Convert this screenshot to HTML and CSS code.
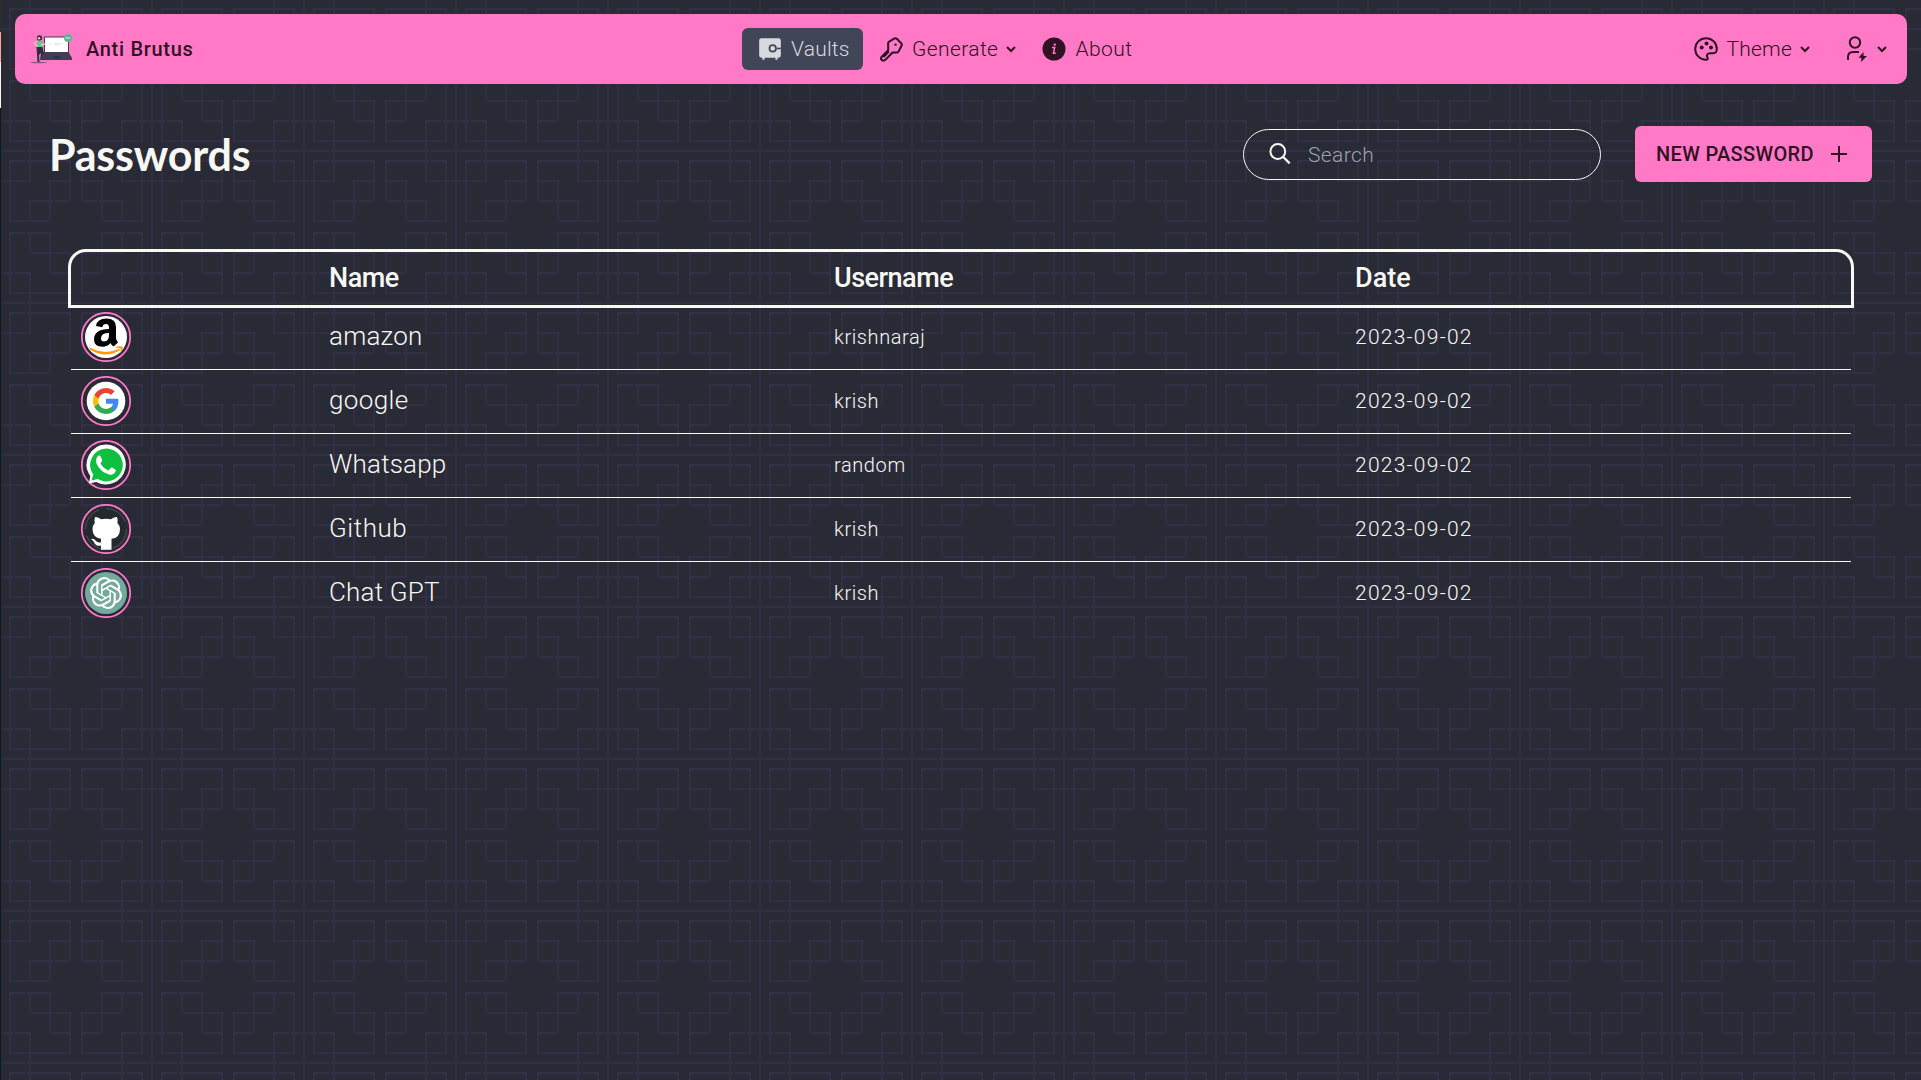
FILE: index.html
```html
<!DOCTYPE html>
<html lang="en">
<head>
<meta charset="utf-8">
<title>Anti Brutus</title>
<link rel="stylesheet" href="styles.css">
</head>
<body>
<div class="edge"></div>
<div class="page">
  <header class="navbar">
    <a class="brand">
      <svg class="logo" width="43" height="30" viewBox="0 0 43 30">
        <ellipse cx="8.500" cy="28.500" rx="8.500" ry=".8" fill="#8b5b80"/>
        <path d="M14 2.500h25v17H14z" fill="#3f3d56"/><path d="M15 3.500h23v14.500H15z" fill="#fff"/>
        <path d="M13 18h25.500L42 24v2H10v-1.500z" fill="#3f3d56"/><path d="M24 22.500h6v1.500h-6z" fill="#2a2840"/>
        <path d="M19 10h3M24 9.500h9M24 11h6" stroke="#e6e6e6"/>
        <circle cx="38" cy="4" r="4" fill="#57b894"/><path d="M35.500 4h5" stroke="#d0c4e8" stroke-width="1.500"/>
        <circle cx="9.500" cy="4" r="2.700" fill="#2f2e41"/><circle cx="9" cy="4.300" r="1.300" fill="#ffb8b8"/>
        <path d="M7 7l5-.5 1 7H7z" fill="#57d08e"/><path d="M7 7.500L4 9.500l4 3M11 11l4-1" fill="none" stroke="#ffb8b8" stroke-width="1.400"/>
        <path d="M6.500 13h6l1 4.500-1.500 6-1.500-.5.500-4-2 2 .500 7H7.500z" fill="#2f2e41"/>
      </svg>
      <span class="brand-name">Anti Brutus</span>
    </a>
    <nav class="menu">
      <a class="item active">
        <svg width="26" height="26" viewBox="0 0 24 24"><path fill="currentColor" d="M20 2H4a2 2 0 0 0-2 2v14a2 2 0 0 0 2 2h1v2h2v-2h10v2h2v-2h1a2 2 0 0 0 2-2V4a2 2 0 0 0-2-2z"/><path d="M18.300 11.500H22" stroke="#414558" stroke-width="1.500"/><circle cx="14.500" cy="11.500" r="3" fill="none" stroke="#414558" stroke-width="1.600"/></svg>
        <span class="t-vaults">Vaults</span>
      </a>
      <a class="item generate">
        <svg width="26" height="26" viewBox="0 0 24 24" fill="none" stroke="currentColor" stroke-width="1.900" stroke-linejoin="round"><path d="M13 3.600l1.800-1.200q1.400-.7 2.600.2l4 4q1 1.300.2 2.700l-2.600 5q-.6 1-1.800 1H13.500l-6.500 6.500q-1.500 1.500-3.400.5-1.500-1.400-.1-3.200l5.900-6V6.600q0-1 .9-1.500z"/><path d="M10 14.300l-5 5"/><circle cx="16.200" cy="8" r="1.100" fill="currentColor" stroke="none"/></svg>
        <span class="t-generate">Generate</span>
        <svg class="chev" width="10" height="7" viewBox="0 0 10 7"><path d="M1 1l4 4 4-4" fill="none" stroke="currentColor" stroke-width="2"/></svg>
      </a>
      <a class="item about">
        <svg width="24" height="24" viewBox="0 0 24 24"><circle cx="12" cy="12" r="11.500" fill="currentColor"/><path d="M10 10.500h2.700l-1.300 5.800h2.400" fill="none" stroke="#ff79c6" stroke-width="1.500"/><circle cx="12.800" cy="7.600" r="1.200" fill="#ff79c6"/></svg>
        <span class="t-about">About</span>
      </a>
    </nav>
    <div class="tools">
      <a class="theme">
        <svg width="24" height="24" viewBox="0 0 24 24"><path d="M12 1.200C6 1.200 1.200 6 1.200 12S6 22.800 12 22.800c2.200 0 2-1.600 1.400-2.400-1.300-2 .2-4.200 2.300-4.200h3.400c2.200 0 3.700-1.800 3.700-4.200C22.800 5.800 18 1.200 12 1.200z" fill="none" stroke="currentColor" stroke-width="2"/><g fill="currentColor"><circle cx="12.500" cy="6.500" r="2"/><circle cx="17" cy="10.500" r="2"/><circle cx="7.700" cy="10.500" r="2"/></g></svg>
        <span class="t-theme">Theme</span>
        <svg class="chev" width="10" height="7" viewBox="0 0 10 7"><path d="M1 1l4 4 4-4" fill="none" stroke="currentColor" stroke-width="2"/></svg>
      </a>
      <a class="user">
        <svg width="21" height="26" viewBox="0 0 21 26"><g fill="none" stroke="currentColor" stroke-width="2"><circle cx="9" cy="6.500" r="5.200"/><path d="M2 24v-3q0-5 5-5h6"/></g><path d="M17.500 16l-5 5.800h3L15 26l6-6h-3.500z" fill="currentColor"/></svg>
        <svg class="chev" width="10" height="7" viewBox="0 0 10 7"><path d="M1 1l4 4 4-4" fill="none" stroke="currentColor" stroke-width="2"/></svg>
      </a>
    </div>
  </header>

  <section class="heading">
    <h1>Passwords</h1>
    <div class="search">
      <svg width="22" height="22" viewBox="0 0 22 22" fill="none" stroke="currentColor" stroke-width="2"><circle cx="8.800" cy="8.500" r="7.400"/><path d="M14 13.700l6.700 6.700" stroke-width="2.300"/></svg>
      <span>Search</span>
    </div>
    <button class="new"><span>NEW PASSWORD</span><svg width="16" height="16" viewBox="0 0 16 16"><path d="M8 0v16M0 8h16" stroke="currentColor" stroke-width="2"/></svg></button>
  </section>

  <main class="table">
    <div class="row head"><span></span><span class="h-name">Name</span><span class="h-user">Username</span><span class="h-date">Date</span></div>
    <div class="row">
      <svg class="avatar" viewBox="0 0 50 50"><circle cx="25" cy="25" r="24.200" fill="none" stroke="#ff79c6" stroke-width="1.700"/><circle cx="25" cy="25" r="21" fill="#fff"/><path d="M15 14q1-7.500 10.500-7.500Q35 6.500 35 15v11q0 2 2 4.500l-4.500 4q-2-1.500-3-3.500-3 3.800-8 3.800-8.500 0-8.500-7.500 0-10 15-10.300v-1.500q0-3.500-3-3.500t-3.700 3.200zM28 21q-8 0-8 5.200 0 3.300 3 3.300 5 0 5-7z" fill="#000"/><path d="M8 35q16 9 31 1.500l-.5 2Q24 47 9 37.500zM35 35q4-1.500 7 0-.3 4-3.300 6.500 1.500-3.500 1-5-2-.8-4.700-.6z" fill="#f90"/></svg>
      <span class="name n1">amazon</span><span class="u1">krishnaraj</span><span class="date">2023-09-02</span>
    </div>
    <div class="row">
      <svg class="avatar" viewBox="0 0 50 50"><circle cx="25" cy="25" r="24.200" fill="none" stroke="#ff79c6" stroke-width="1.700"/><circle cx="25" cy="25" r="19.300" fill="#fff"/><g transform="translate(12 12) scale(1.083)"><path fill="#4285f4" d="M23.500 12.300c0-.8-.1-1.600-.2-2.300H12v4.500h6.500c-.3 1.500-1.200 2.800-2.400 3.600v3h3.900c2.200-2.100 3.500-5.100 3.500-8.800z"/><path fill="#34a853" d="M12 24c3.200 0 6-1.100 8-2.900l-3.900-3c-1.100.7-2.500 1.200-4.100 1.200-3.100 0-5.800-2.100-6.700-5H1.200v3.100C3.200 21.300 7.300 24 12 24z"/><path fill="#fbbc05" d="M5.300 14.300c-.5-1.500-.5-3.100 0-4.600V6.600H1.200c-1.600 3.400-1.600 7.400 0 10.800z"/><path fill="#ea4335" d="M12 4.700c1.800 0 3.300.6 4.600 1.800L20 3.100C18 1.200 15.200 0 12 0 7.300 0 3.200 2.700 1.200 6.600l4.100 3.100c.9-2.900 3.600-5 6.700-5z"/></g></svg>
      <span class="name n2">google</span><span class="u2">krish</span><span class="date">2023-09-02</span>
    </div>
    <div class="row">
      <svg class="avatar" viewBox="0 0 50 50"><circle cx="25" cy="25" r="24.200" fill="none" stroke="#ff79c6" stroke-width="1.700"/><path d="M25 4.500a20 20 0 1 1-9.700 37.600L8 43.500l1.300-7.500A20 20 0 0 1 25 4.500z" fill="#fff"/><path d="M25.300 8.500a16.500 16.500 0 1 1-8.600 30.600l-6.200 1.500 1.800-6A16.500 16.500 0 0 1 25.300 8.500z" fill="#0ebf40"/><path d="M17.500 15.500q1.500-.3 2 .8l1.700 4q.2.900-1.800 3 3 5.200 8.300 7.100l2-2.500q.6-.7 1.500-.3l3 1.800q.8.400.5 1.600-1 3.700-5.500 3.700-3.500-.2-8.200-3.600-4-3.300-5.500-7.500-1.500-5.200 2-8.100z" fill="#fff"/></svg>
      <span class="name n3">Whatsapp</span><span class="u3">random</span><span class="date">2023-09-02</span>
    </div>
    <div class="row">
      <svg class="avatar" viewBox="0 0 50 50"><circle cx="25" cy="25" r="24.200" fill="none" stroke="#ff79c6" stroke-width="1.700"/><circle cx="25" cy="25" r="21" fill="#24292e"/><circle cx="25" cy="25" r="20.500" fill="none" stroke="#6d7073" stroke-width=".6" stroke-dasharray="25 7"/><path d="M14 13q3 0 6 2.200 5-1 10 0Q33 13 36 13q1.200 3 .4 6Q39 21.500 39 25q0 9-8.500 9.800V45.800H20v-4q-5.500.5-7-3.600-.8-2-3-3 2.500-1.500 4.500 1.300 2 2.800 5.500 1.700v-3.400Q11.500 33.500 11.500 25q0-3.500 2.300-6-.8-3 .2-6z" fill="#fff"/></svg>
      <span class="name n4">Github</span><span class="u2">krish</span><span class="date">2023-09-02</span>
    </div>
    <div class="row">
      <svg class="avatar" viewBox="0 0 50 50"><circle cx="25" cy="25" r="24.200" fill="none" stroke="#ff79c6" stroke-width="1.700"/><circle cx="25" cy="25" r="21" fill="#74aa9c"/><path transform="translate(9 9) scale(1.333)" fill="#fff" d="M22.282 9.821a5.985 5.985 0 0 0-.516-4.910 6.046 6.046 0 0 0-6.510-2.900A6.065 6.065 0 0 0 4.981 4.182a5.985 5.985 0 0 0-3.998 2.900 6.046 6.046 0 0 0 .743 7.097 5.980 5.980 0 0 0 .511 4.911 6.051 6.051 0 0 0 6.515 2.900A5.985 5.985 0 0 0 13.260 24a6.056 6.056 0 0 0 5.772-4.206 5.990 5.990 0 0 0 3.998-2.900 6.056 6.056 0 0 0-.748-7.073zM13.260 22.430a4.476 4.476 0 0 1-2.876-1.041l.141-.080 4.779-2.758a.795.795 0 0 0 .393-.681v-6.737l2.020 1.169a.071.071 0 0 1 .038.052v5.583a4.504 4.504 0 0 1-4.495 4.493zM3.600 18.304a4.470 4.470 0 0 1-.535-3.014l.142.085 4.783 2.759a.771.771 0 0 0 .780 0l5.843-3.369v2.332a.080.080 0 0 1-.033.062L9.740 19.950a4.499 4.499 0 0 1-6.140-1.646zM2.340 7.896a4.485 4.485 0 0 1 2.366-1.973V11.600a.766.766 0 0 0 .388.677l5.815 3.355-2.020 1.168a.076.076 0 0 1-.071 0l-4.830-2.786A4.504 4.504 0 0 1 2.340 7.872zm16.597 3.855l-5.833-3.387L15.119 7.200a.076.076 0 0 1 .071 0l4.830 2.791a4.494 4.494 0 0 1-.676 8.105v-5.678a.790.790 0 0 0-.407-.667zm2.010-3.023l-.141-.085-4.774-2.782a.776.776 0 0 0-.785 0L9.409 9.230V6.897a.066.066 0 0 1 .028-.061l4.830-2.787a4.499 4.499 0 0 1 6.680 4.660zM8.307 12.863l-2.020-1.164a.080.080 0 0 1-.038-.057V6.075a4.499 4.499 0 0 1 7.376-3.454l-.142.081L8.704 5.460a.795.795 0 0 0-.393.681zm1.097-2.365l2.602-1.500 2.607 1.500v2.999l-2.597 1.500-2.607-1.500z"/></svg>
      <span class="name n5">Chat GPT</span><span class="u2">krish</span><span class="date">2023-09-02</span>
    </div>
  </main>
</div>
</body>
</html>
```
FILE: styles.css
```css
* { box-sizing: border-box; }
body {
  margin: 0;
  height: 1080px;
  overflow: hidden;
  display: flex;
  background: #282a36;
  color: #f8f8f2;
  font-family: Roboto, "Liberation Sans", sans-serif;
  font-weight: 300;
}
svg { display: block; flex: none; }
.edge {
  width: 1px;
  background: linear-gradient(#2b3026 0 32px, #ffa592 32px 62px, #fff3ee 62px 108px, #0c1a20 108px);
}
.page {
  flex: 1;
  padding: 14px;
  background-image: url("data:image/svg+xml,%3Csvg xmlns='http://www.w3.org/2000/svg' width='152' height='152'%3E%3Cpath d='M9 9H69V49H29V69M69 29H49V69H9V9M29 0V29H0M141 9H81V49H121V69M81 29H101V69H141V9M121 0V29H152M9 141H69V101H29V81M69 121H49V81H9V141M29 152V121H0M141 141H81V101H121V81M81 121H101V81H141V141M121 152V121H152M151 0V151H0' fill='none' stroke='%23322f44' stroke-width='2' stroke-linecap='square'/%3E%3C/svg%3E");
}
.navbar {
  height: 70px;
  display: grid;
  grid-template-columns: 727px 1fr auto;
  align-items: center;
  padding-right: 20px;
  border-radius: 10px;
  background: #ff79c6;
  color: #301224;
  font-size: 21px;
}
.brand, .menu, .item, .tools, .theme, .user { display: flex; align-items: center; }
.brand { padding-left: 15px; gap: 13px; }
.brand-name { font-size: 20px; font-weight: 500; letter-spacing: .7px; }
.item { height: 42px; }
.active {
  width: 121px;
  padding-left: 15px;
  gap: 8px;
  border-radius: 6px;
  background: #414558;
  color: #d8d9de;
}
.t-vaults { letter-spacing: .2px; }
.t-generate { letter-spacing: .4px; }
.t-about { letter-spacing: .45px; }
.t-theme { letter-spacing: .2px; }
.generate { margin-left: 15px; gap: 8px; }
.about { margin-left: 26px; gap: 9px; }
.chev { margin-top: 1px; }
.theme { gap: 9px; }
.user { margin-left: 36px; gap: 10px; }
.theme .chev { margin-left: -1px; }

.heading { display: flex; align-items: center; height: 56px; margin: 42px 35px 0 34px; }
h1 { flex: 1; margin: 0; padding-top: 1px; font: 700 43px/52px Lato, sans-serif; letter-spacing: -.2px; }
.search {
  width: 358px;
  height: 51px;
  display: flex;
  align-items: center;
  gap: 17px;
  padding-left: 25px;
  border: 1px solid #f8f8f2;
  border-radius: 26px;
  font-size: 21px;
}
.search span { padding-top: 2px; color: #9ca3af; letter-spacing: .4px; }
.new {
  width: 237px;
  height: 56px;
  margin-left: 34px;
  padding: 0 25px 0 21px;
  display: flex;
  align-items: center;
  justify-content: space-between;
  border: 0;
  border-radius: 6px;
  background: #ff79c6;
  color: #301224;
  font: 500 20px Roboto, sans-serif;
  letter-spacing: .33px;
}

.table { margin: 67px 53px 0; }
.row {
  display: grid;
  grid-template-columns: 248px 505px 521px 1fr;
  align-items: center;
  height: 64px;
  margin: 0 3px;
  padding-left: 10px;
  padding-bottom: 1px;
  border-bottom: 1px solid #f8f8f2;
  font-size: 20px;
}
.row:last-child { border-bottom: 0; padding-bottom: 2px; }
.head {
  height: 59px;
  margin: 0;
  padding: 0 0 2px 10px;
  border: 3px solid #f8f8f2;
  border-radius: 18px 18px 0 0;
  font-size: 27px;
  font-weight: 500;
}
.head + .row { height: 62px; padding-bottom: 3px; }
.h-name, .h-user { letter-spacing: -.5px; }
.avatar { width: 50px; height: 50px; }
.name { padding-bottom: 2px; font-size: 26px; letter-spacing: .2px; }
.n2 { letter-spacing: .4px; }
.n4 { letter-spacing: .55px; }
.u1, .u2, .u3 { letter-spacing: .6px; }
.date { font-size: 21px; letter-spacing: 1.25px; }
```
